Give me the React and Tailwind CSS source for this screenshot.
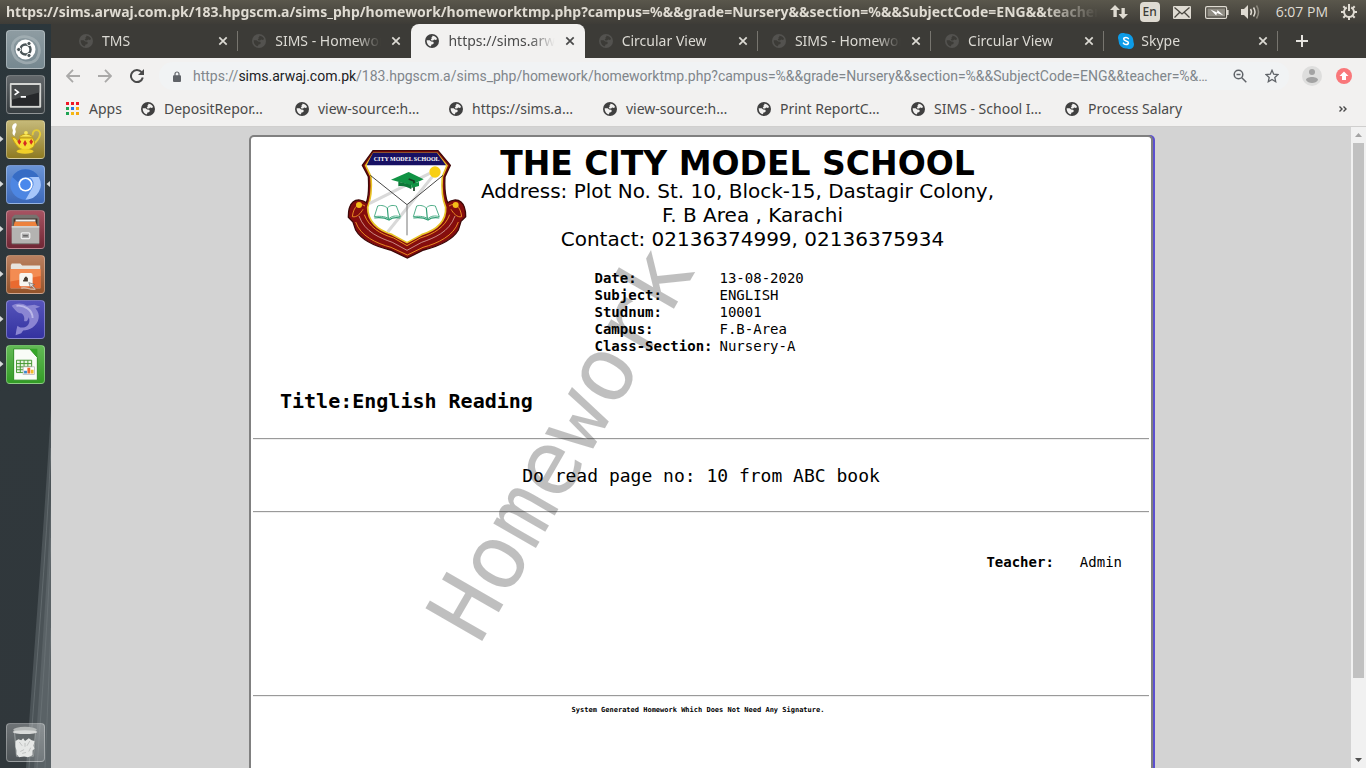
import React from "react";

const TAB_TITLES = [
  { title: "TMS", icon: "globe" },
  { title: "SIMS - Homework", icon: "globe" },
  { title: "https://sims.arwaj", icon: "globe", active: true },
  { title: "Circular View", icon: "globe" },
  { title: "SIMS - Homework", icon: "globe" },
  { title: "Circular View", icon: "globe" },
  { title: "Skype", icon: "skype" },
];

const BOOKMARKS = [
  "DepositRepor…",
  "view-source:h…",
  "https://sims.a…",
  "view-source:h…",
  "Print ReportC…",
  "SIMS - School I…",
  "Process Salary",
];

const DETAILS = [
  ["Date:", "13-08-2020"],
  ["Subject:", "ENGLISH"],
  ["Studnum:", "10001"],
  ["Campus:", "F.B-Area"],
  ["Class-Section:", "Nursery-A"],
];

function Globe({ className }) {
  return (
    <svg viewBox="0 0 14 14" className={className} aria-hidden="true">
      <circle cx="7" cy="7" r="7" fill="currentColor" />
      <path
        d="M7.200 1.700c2.300-.1 4.200 1.300 4.900 3.300l-1.200 1-1.700-.4-1.100 1-1.700 0-.7-1.100 1-.8-.3-1.100 1-.8zM1.700 6.200l3 0 1.400 1.300 2 .3.800 1.100-1 1.300-1.400.4-.6 1.700C3.700 12 1.500 9.600 1.700 6.200z"
        className="fill-[var(--land)]"
      />
    </svg>
  );
}

function SkypeIcon() {
  return (
    <svg viewBox="0 0 16 16" className="size-4 shrink-0" aria-hidden="true">
      <path d="M4.500 0C7 0 6.500.6 8 .6c4.200 0 7.400 3.300 7.400 7.400 0 1.300.6 2 .6 3.500A4.500 4.500 0 0 1 11.500 16c-1.500 0-2-.6-3.500-.6A7.400 7.400 0 0 1 .6 8C.6 6.500 0 6 0 4.500A4.500 4.500 0 0 1 4.500 0z" fill="#0d9ce8" />
      <path d="M10.400 5.700C9.800 4.700 9 4.500 8 4.500c-1.300 0-2.300.5-2.300 1.600 0 2.400 4.700 1.200 4.700 3.600 0 1.200-1.100 1.800-2.400 1.800-1.200 0-2.100-.4-2.600-1.400" fill="none" stroke="#fff" strokeWidth="1.500" strokeLinecap="round" />
    </svg>
  );
}

function TopBar() {
  return (
    <header className="flex h-6 shrink-0 items-center bg-linear-to-b from-[#5a574c] to-[#3e3c37] text-[#dfdbd2]">
      <h1 className="min-w-0 flex-1 overflow-hidden pl-[6px] font-['Noto_Sans',sans-serif] text-[14px] leading-6 font-bold whitespace-nowrap mask-[linear-gradient(to_right,black_95%,transparent_100%)]">
        https://sims.arwaj.com.pk/183.hpgscm.a/sims_php/homework/homeworktmp.php?campus=%&&grade=Nursery&&section=%&&SubjectCode=ENG&&teacher=
      </h1>
      <div className="flex shrink-0 items-center pr-2 pl-3">
        <svg viewBox="0 0 18 16" className="h-4 w-[18px]" aria-label="Network">
          <path d="M5 1l5 5H6.800v7H3.400V6H0zM13 15L8.500 10h3V4h3.300v6H18z" fill="#dfdbd2" />
        </svg>
        <span className="ml-3 flex h-5 w-5 items-center justify-center rounded-sm bg-[#dfdbd2] font-['Noto_Sans',sans-serif] text-[12px] leading-5 font-medium text-[#3c3b37]">En</span>
        <svg viewBox="0 0 18 13" className="ml-[13px] h-[13px] w-[18px]" aria-label="Mail">
          <rect width="18" height="13" rx="1" fill="#dfdbd2" />
          <path d="M1.500 1.500L9 8l7.500-6.500M1.500 11.500l5-5M16.500 11.500l-5-5" fill="none" stroke="#4a4740" strokeWidth="1.300" />
        </svg>
        <svg viewBox="0 0 24 13" className="ml-[14px] h-[13px] w-6" aria-label="Battery">
          <rect x=".6" y=".6" width="21" height="11.800" rx="1.500" fill="none" stroke="#dfdbd2" strokeWidth="1.200" />
          <rect x="2.500" y="2.500" width="17.500" height="8" fill="#8f8c83" />
          <path d="M22 4h1.600v5H22z" fill="#dfdbd2" />
          <path d="M5.500 3.500l6.500 3 .5-2.500 6 5.500-6.500-2.600-.8 2.600z" fill="#fff" />
        </svg>
        <svg viewBox="0 0 20 16" className="ml-3 h-4 w-5" aria-label="Sound">
          <path d="M0 5h3l4-4v14l-4-4H0z" fill="#dfdbd2" />
          <path d="M9.500 5q2 3 0 6M12.500 3.500q3 4.500 0 9" fill="none" stroke="#dfdbd2" strokeWidth="1.500" />
          <path d="M15.500 1.500q4 6.500 0 13" fill="none" stroke="#8b877d" strokeWidth="1.500" />
        </svg>
        <time className="ml-[15px] font-['Open_Sans',sans-serif] text-[14px] leading-6">6:07 PM</time>
        <svg viewBox="0 0 18 18" className="ml-3 size-[18px]" aria-label="System" fill="none" stroke="#dfdbd2">
          <path d="M6.800 4.500a5 5 0 1 0 4.400 0" strokeWidth="2" />
          <path d="M9 1v7" strokeWidth="2" />
          <path d="M3.300 3.300l2 2M14.700 3.300l-2 2M1 9h3M14 9h3M3.300 14.700l2-2M14.700 14.700l-2-2M9 14v3" strokeWidth="2" />
        </svg>
      </div>
    </header>
  );
}

function LauncherTile({ label, tint, running, focused, children }) {
  return (
    <li className="relative flex w-full pl-[6px]">
      {running && (
        <svg viewBox="0 0 4 6" className="absolute top-4 left-0 h-[6px] w-1" aria-hidden="true">
          <path d="M0 0l3.500 3L0 6z" fill="#d5d8d9" />
        </svg>
      )}
      <button aria-label={label} className={`size-[39px] overflow-hidden rounded-[4px] border border-white/30 ${tint}`}>
        <svg viewBox="0 0 39 39" className="size-full" aria-hidden="true">
          {children}
        </svg>
      </button>
      {focused && (
        <svg viewBox="0 0 4 6" className="absolute top-4 right-[1px] h-[6px] w-1" aria-hidden="true">
          <path d="M4 0L.5 3 4 6z" fill="#d5d8d9" />
        </svg>
      )}
    </li>
  );
}

function Launcher() {
  return (
    <nav className="relative flex w-[51px] shrink-0 flex-col justify-between bg-linear-to-b from-[#2b363b] via-[#30383c] to-[#30373b] pt-[6px] pb-[6px]">
      <svg viewBox="0 0 51 360" preserveAspectRatio="none" className="absolute right-0 bottom-0 h-[360px] w-full" aria-hidden="true">
        <path d="M51 0V360H26C34 240 44 120 51 0z" fill="#4b5357" />
        <path d="M51 90V360H34C40 270 47 180 51 90z" fill="#5a6266" />
        <path d="M51 40C46 150 36 260 29 360M51 130C48 210 42 290 37 360M51 220L45 360" fill="none" stroke="#70787b" strokeWidth="1" opacity=".6" />
      </svg>
      <ul className="flex flex-col gap-[6px]">
        <LauncherTile label="Dash" tint="bg-linear-to-b from-[#8e9ca2] to-[#768890]">
          <path d="M7 24C2 12 12 3 24 7c10 3 13 14 7 23M31 30c-8 7-21 3-24-6" fill="none" stroke="#aab5b9" strokeWidth="3" opacity=".7" />
          <circle cx="19.500" cy="19.500" r="10.500" fill="#fff" />
          <circle cx="19.500" cy="19.500" r="5.300" fill="none" stroke="#4b5558" strokeWidth="2.600" />
          <g fill="#4b5558" stroke="#fff" strokeWidth="1">
            <circle cx="12.300" cy="19.500" r="2.200" />
            <circle cx="23.200" cy="13.200" r="2.200" />
            <circle cx="23.200" cy="25.800" r="2.200" />
          </g>
        </LauncherTile>
        <LauncherTile label="Terminal" tint="bg-linear-to-b from-[#63686b] to-[#383e41]">
          <rect x="3" y="7.500" width="33" height="26" rx="1" fill="#d4d5d2" />
          <rect x="5" y="9.500" width="29" height="22" fill="#26282a" />
          <path d="M5 9.500h29v8L5 25z" fill="#46494a" />
          <path d="M8 14l4 3-4 3M14.500 22h5.500" fill="none" stroke="#fff" strokeWidth="1.700" />
        </LauncherTile>
        <LauncherTile label="Teapot" running tint="bg-linear-to-b from-[#c5b978] to-[#8f7b20]">
          <path d="M8 16c-4-3-1-5-2-7-2-4 2-8 4-6 1 3-2 4-1 7 1 2-1 3-1 6z" fill="#fff" />
          <path d="M27 15c0-7 8-7 8-1-1 5-4 8-8 11" fill="none" stroke="#e5cb35" strokeWidth="2" />
          <path d="M5 17l4 1 3 4 2-4h13c4 6 2 10-4 12H16c-5-2-8-7-11-13z" fill="#f6dc36" stroke="#c59e13" />
          <path d="M13 17c3-4 11-4 14 0z" fill="#f9e85c" stroke="#c59e13" />
          <circle cx="20" cy="12.500" r="2" fill="#f9e85c" />
          <ellipse cx="19" cy="32" rx="9" ry="2.500" fill="#f0cf28" />
          <path d="M13 19l2 3-2 3-2-3zM19 20l2 3.500-2 3.500-2-3.500zM25.500 19l2 3-2 3-2-3z" fill="#d52a20" />
        </LauncherTile>
        <LauncherTile label="Chromium" running focused tint="bg-linear-to-b from-[#6a94d6] to-[#3c68b8]">
          <circle cx="19.500" cy="19.500" r="16" fill="#4d86e2" />
          <path d="M5.600 11.500A16 16 0 0 1 33.400 11.500H19.500a8 8 0 0 0-7.500 6z" fill="#376cc4" />
          <path d="M33.400 11.500A16 16 0 0 1 19.500 35.500l7-12a8 8 0 0 0-3-12z" fill="#a6c6fa" />
          <circle cx="19.500" cy="19.500" r="7.500" fill="#fff" />
          <circle cx="19.500" cy="19.500" r="5.700" fill="#4a88ec" />
        </LauncherTile>
        <LauncherTile label="Files" running tint="bg-linear-to-b from-[#a75362] to-[#702735]">
          <path d="M5 7l3-3h23l3 3v28H5z" fill="#77736f" />
          <path d="M7 8h25v8H7z" fill="#3e332d" />
          <path d="M8 11h22l2 5H7z" fill="#ed823d" />
          <path d="M9 9h21v2H9z" fill="#eee" />
          <path d="M5 16h29v18H5z" fill="#b4b3b1" />
          <path d="M5 16h29v1.500H5z" fill="#e2e1df" />
          <rect x="15" y="23" width="9" height="6" rx="1" fill="#aaa" stroke="#f0f0f0" strokeWidth="1.300" />
          <path d="M17 26h5" stroke="#666" strokeWidth="1.500" />
        </LauncherTile>
        <LauncherTile label="Remote folder" running tint="bg-linear-to-b from-[#ba8060] to-[#945329]">
          <path d="M4 10l1-2h9l2 2h19v24H4z" fill="#e7e3de" />
          <path d="M3.500 14h32v20h-32z" fill="#e96a30" />
          <path d="M3.500 14h32v7l-32 6z" fill="#f38c52" />
          <rect x="13" y="18" width="14" height="14" rx="2" fill="#f7f5ef" />
          <path d="M18 25v-2h1v-1h2v1h1v4h-5v-2z" fill="#463b30" />
          <path d="M23 28l6 2-2 1 3 3-1 1-3-3-1 2z" fill="#ddd" stroke="#555" strokeWidth=".6" />
          <path d="M15 34c5-2 8 2 15 1" fill="none" stroke="#d5b59f" strokeWidth="1.500" />
        </LauncherTile>
        <LauncherTile label="Dolphin database" running tint="bg-linear-to-b from-[#5654bb] to-[#3432a0]">
          <path d="M5 5c5-3 11-3 16 0l8-1 6 2-5 2c6 6 4 15-3 20-3 2-7 3-10 3l-2 3-6 2 1-6 1-4c2 2 4 2 6 2 5-1 8-5 6-11-1 4-3 5-5 4 1-4-1-7-3-8-4 0-7-4-10-8z" fill="#8a85d2" />
          <path d="M10 5c8-1 17 4 17 13" fill="none" stroke="#bab7e8" strokeWidth="2" />
        </LauncherTile>
        <LauncherTile label="Spreadsheet" running tint="bg-linear-to-b from-[#62b955] to-[#329c25]">
          <path d="M7 3h17l8 9v24H7z" fill="#f9fcf7" stroke="#288b1d" strokeWidth="1" />
          <path d="M24 3h8v9z" fill="#35a529" />
          <path d="M10 15h16v13H10z" fill="#e5f3df" stroke="#43962f" />
          <path d="M10 18.500h16M10 22h16M10 25h16M14 15v13M18 15v13M22 15v13" stroke="#43962f" />
          <rect x="17" y="22" width="12" height="8" fill="#fff" stroke="#aaa" strokeWidth=".7" />
          <path d="M18 26h3v3h-3z" fill="#3c87cc" />
          <path d="M21.500 23h3v6h-3z" fill="#ec6930" />
          <path d="M25 25h3v4h-3z" fill="#efbb2c" />
        </LauncherTile>
      </ul>
      <ul>
        <LauncherTile label="Trash" tint="bg-linear-to-b from-white/30 to-white/15">
          <path d="M8 9l2 25h18l2-25z" fill="#62686a" stroke="#9da2a3" />
          <ellipse cx="19" cy="6" rx="12.500" ry="3" fill="#b5b9b8" />
          <ellipse cx="19" cy="8.500" rx="13" ry="2" fill="#d9dbda" />
          <path d="M9 18l3-2 3 1 2-2 2 3 4-3 3 2 3 1-1 5 1 3-2 2v5l-5 2-4-1-5 1-3-3v-4l-1-4z" fill="#e5e7e6" />
          <path d="M13 19l3 4M24 18l-3 5M14 29l4-2M25 25l-2 4M19 20v4M16 31l4-1" stroke="#bdc0c0" />
        </LauncherTile>
      </ul>
    </nav>
  );
}

function Tab({ title, icon, active, divider }) {
  return (
    <li
      className={`relative flex h-[34px] min-w-0 flex-1 items-center pr-[10px] pl-[14px] ${
        active ? "rounded-t-lg bg-[#f2f1f0] text-[#4a4a4a]" : "text-[#dcdad4]"
      }`}
    >
      {icon === "skype" ? (
        <SkypeIcon />
      ) : (
        <Globe className={`size-[14px] shrink-0 ${active ? "text-[#404040] [--land:#f2f1f0]" : "text-[#53524f] [--land:#3c3b37]"}`} />
      )}
      <a
        href="#tab"
        className={`min-w-0 flex-1 overflow-hidden font-['Noto_Sans',sans-serif] text-[14px] leading-5 whitespace-nowrap mask-[linear-gradient(to_right,black_75%,transparent_98%)] ${icon === "skype" ? "ml-[7px]" : "ml-[9px]"}`}
      >
        {title}
      </a>
      <button aria-label={`Close ${title}`} className="ml-2 flex size-[10px] items-center justify-center">
        <svg viewBox="0 0 10 10" className="size-[10px]" aria-hidden="true">
          <path d="M1.300 1.300l7.400 7.400M8.700 1.300L1.300 8.700" stroke="currentColor" strokeWidth="1.700" />
        </svg>
      </button>
      {divider && <span className="absolute top-[7px] right-0 h-5 w-px bg-[#77756f]" />}
    </li>
  );
}

function TabStrip() {
  return (
    <div className="flex h-[34px] items-center bg-[#3c3b37] pl-[14px]">
      <ul className="flex w-[93.2%] min-w-0">
        {TAB_TITLES.map((tab, i) => (
          <Tab key={i} {...tab} divider={i !== 1 && i !== 2} />
        ))}
      </ul>
      <button aria-label="New tab" className="ml-[18px]">
        <svg viewBox="0 0 12 12" className="size-3" aria-hidden="true">
          <path d="M6 0v12M0 6h12" stroke="#e6e4df" strokeWidth="2" />
        </svg>
      </button>
    </div>
  );
}

function Toolbar() {
  return (
    <div className="flex h-9 items-center bg-[#f2f1f0] pr-[14px] pl-[15px]">
      <button aria-label="Back">
        <svg viewBox="0 0 14 14" className="size-[14px]" fill="none" stroke="#aaa9a8" strokeWidth="1.800">
          <path d="M14 7H1.500M7 .8L1 7l6 6.200" />
        </svg>
      </button>
      <button aria-label="Forward" className="ml-[18px]">
        <svg viewBox="0 0 14 14" className="size-[14px]" fill="none" stroke="#aaa9a8" strokeWidth="1.800">
          <path d="M0 7h12.500M7 .8L13 7l-6 6.200" />
        </svg>
      </button>
      <button aria-label="Reload" className="ml-[18px]">
        <svg viewBox="0 0 14 14" className="size-[14px]">
          <path d="M11.600 3.200A6 6 0 1 0 12.800 8.500" fill="none" stroke="#4a4a4a" strokeWidth="2" />
          <path d="M14 0v6H8z" fill="#4a4a4a" />
        </svg>
      </button>
      <form className="ml-[15px] flex h-7 min-w-0 flex-1 items-center rounded-full bg-[#f1f3f4] pr-[10px] pl-[14px]">
        <svg viewBox="0 0 8 11" className="h-[11px] w-2 shrink-0" aria-label="Secure">
          <path d="M2 5V3a2 2 0 0 1 4 0v2" fill="none" stroke="#5f6368" strokeWidth="1.200" />
          <rect y="4.200" width="8" height="6.800" rx="1" fill="#5f6368" />
        </svg>
        <a href="#page" className="ml-3 min-w-0 flex-1 truncate font-['Roboto',sans-serif] text-[14px] leading-5 text-[#80868b]">
          https://<span className="text-[#202124]">sims.arwaj.com.pk</span>/183.hpgscm.a/sims_php/homework/homeworktmp.php?campus=%&&grade=Nursery&&section=%&&SubjectCode=ENG&&teacher=%&…
        </a>
        <button type="button" aria-label="Zoom" className="ml-[15px]">
          <svg viewBox="0 0 14 14" className="size-[14px]" fill="none" stroke="#5f6368" strokeWidth="1.500">
            <circle cx="5.500" cy="5.500" r="4.300" />
            <path d="M8.800 8.800l4.500 4.500M3.500 5.500h4" />
          </svg>
        </button>
        <button type="button" aria-label="Bookmark this page" className="ml-[18px]">
          <svg viewBox="0 0 14 14" className="size-[14px]" fill="none" stroke="#5f6368" strokeWidth="1.300">
            <path d="M7 1.300l1.700 3.900 4.300.4-3.200 2.900.9 4.200L7 10.500l-3.700 2.200.9-4.200L1 5.600l4.300-.4z" />
          </svg>
        </button>
      </form>
      <button aria-label="Profile" className="ml-[13px]">
        <svg viewBox="0 0 20 20" className="size-5">
          <circle cx="10" cy="10" r="10" fill="#dededd" />
          <circle cx="10" cy="6" r="3" fill="#a3a3a3" />
          <path d="M4 14c0-4 12-4 12 0-2 4-10 4-12 0z" fill="#a3a3a3" />
        </svg>
      </button>
      <button aria-label="Update" className="ml-[14px]">
        <svg viewBox="0 0 16 16" className="size-4">
          <circle cx="8" cy="8" r="8" fill="#f9777a" />
          <path d="M8 3.500l4.500 4.500H10v4H6V8H3.500z" fill="#fff" />
        </svg>
      </button>
    </div>
  );
}

function AppsIcon() {
  const colors = ["#f01827", "#f01827", "#f01827", "#1fa352", "#2676e6", "#f5a812", "#1fa352", "#f5b912", "#f5a812"];
  return (
    <svg viewBox="0 0 13 13" className="size-[13px]" aria-hidden="true">
      {colors.map((c, i) => (
        <rect key={i} x={(i % 3) * 5} y={Math.floor(i / 3) * 5} width="3" height="3" fill={c} />
      ))}
    </svg>
  );
}

function BookmarkBar() {
  return (
    <nav className="flex h-[33px] items-center border-b border-[#d0cfce] bg-[#f2f1f0] pr-[19px] pb-[3px] pl-[15px] font-['Noto_Sans',sans-serif] text-[14px] leading-5 text-[#4a4a4a]">
      <a href="#apps" className="flex w-[75px] shrink-0 items-center gap-[10px]">
        <AppsIcon />
        Apps
      </a>
      {BOOKMARKS.map((b, i) => (
        <a key={i} href="#bookmark" className="flex w-[154px] shrink-0 items-center gap-[9px] whitespace-nowrap">
          <Globe className="size-[14px] shrink-0 text-[#404040] [--land:#f2f1f0]" />
          {b}
        </a>
      ))}
      <button aria-label="More bookmarks" className="ml-auto">
        <svg viewBox="0 0 8 6" className="h-[6px] w-2" fill="none" stroke="#4a4a4a" strokeWidth="1.400">
          <path d="M.5.5L3 3 .5 5.500M4.500.5L7 3 4.500 5.500" />
        </svg>
      </button>
    </nav>
  );
}

function Crest() {
  return (
    <svg viewBox="20 25 360 330" className="h-[110px] w-[120px] shrink-0" role="img" aria-label="The City Model School crest">
      <path
        d="M98 30H293L330 74L314 108C312 140 314 165 322 186C332 178 350 174 362 184C374 194 376 210 376 228L362 242L354 268C338 296 298 316 250 328L201 352L150 328C100 316 62 296 46 268L38 244L24 230C24 208 26 194 38 184C50 174 68 178 78 186C86 165 86 140 84 108L66 74Z"
        fill="#850d0d"
        stroke="#3d0808"
        strokeWidth="4"
      />
      <path
        d="M100 38H290L320 75L306 108C303 145 306 175 316 200C318 240 290 268 244 282L200 306L156 282C110 268 82 240 82 200C92 175 95 145 92 108L76 75Z"
        fill="#fff"
        stroke="#e8c426"
        strokeWidth="5"
      />
      <path d="M88 188L268 98M142 274L284 98" stroke="#d9d9d9" strokeWidth="9" />
      <path d="M98 36H290L317 74H79Z" fill="#171063" />
      <text x="199" y="61" textAnchor="middle" fill="#fff" className="font-['Liberation_Serif',serif] text-[18px] font-bold">
        CITY MODEL SCHOOL
      </text>
      <path d="M90 104L200 192L308 104" fill="none" stroke="#222" strokeWidth="2.500" />
      <path d="M200 192V284" stroke="#777" strokeWidth="3" />
      <circle cx="284" cy="94" r="17" fill="#f8cf13" />
      <path d="M152 117L205 94L250 116L212 134Z" fill="#109344" />
      <path d="M174 123V137C186 134 202 138 213 146V132Z" fill="#0c7837" />
      <path d="M205 115L221 121V151" fill="none" stroke="#173b22" strokeWidth="5" />
      <path d="M236 124V136L213 142V130Z" fill="#109344" />
      {[0, 117].map((dx) => (
        <g key={dx} transform={`translate(${dx} 0)`} fill="none" stroke="#2e9d72" strokeWidth="2.500">
          <path d="M112 196C124 192 134 196 141 202C150 192 160 194 168 196L180 228C166 224 154 226 146 234C132 226 116 226 102 228Z" fill="#fff" />
          <path d="M141 202L144 234M102 232C118 230 132 230 146 238C156 230 168 230 180 232" strokeWidth="3.500" />
        </g>
      ))}
      <path d="M74 196C56 184 40 196 36 228C50 232 62 216 68 206" fill="none" stroke="#e88a22" strokeWidth="3" />
      <path d="M326 196C344 184 360 196 364 228C350 232 338 216 332 206" fill="none" stroke="#e88a22" strokeWidth="3" />
      <circle cx="56" cy="193" r="9" fill="#f3bd18" />
      <circle cx="346" cy="193" r="9" fill="#f3bd18" />
      <path d="M46 244C60 286 108 308 152 320L201 343L248 320C292 308 340 286 354 244" fill="none" stroke="#e88a22" strokeWidth="3" />
      <path d="M72 222C86 260 120 280 160 292L200 315L240 292C280 280 314 260 328 222" fill="none" stroke="#e88a22" strokeWidth="3" />
      <path d="M56 226C74 276 120 292 156 305L200 329L244 305C280 292 326 276 344 226" fill="none" stroke="#f0c9c0" strokeWidth="2" />
    </svg>
  );
}

function Rule() {
  return <hr className="mx-[2px] h-[2px] border-t border-b border-t-[#9a9a9a] border-b-[#eeeeee]" />;
}

function Homework() {
  return (
    <article className="relative mt-2 w-full max-w-[904px] rounded-t-[5px] border-2 border-b-0 border-[#808080] bg-white font-['DejaVu_Sans_Mono',monospace] text-black shadow-[2px_0_0_#5b4fd0]">
      <header className="flex justify-center pt-3 pr-[61px]">
        <Crest />
        <div className="ml-[14px] text-center font-['DejaVu_Sans',sans-serif] text-[20px] leading-[24px]">
          <h2 className="text-[33px] leading-[30px] font-bold">THE CITY MODEL SCHOOL</h2>
          <p>Address: Plot No. St. 10, Block-15, Dastagir Colony,</p>
          <div className="pl-[30px]">
            <p>F. B Area , Karachi</p>
            <p>Contact: 02136374999, 02136375934</p>
          </div>
        </div>
      </header>
      <table className="mx-auto mt-[11px] text-[14px] leading-[17px]">
        <tbody>
          {DETAILS.map(([k, v]) => (
            <tr key={k}>
              <th scope="row" className="w-[125px] p-0 text-left font-bold">{k}</th>
              <td className="w-[88px] p-0">{v}</td>
            </tr>
          ))}
        </tbody>
      </table>
      <h3 className="mt-[34px] pl-[29px] text-[20px] leading-6 font-bold">Title:English Reading</h3>
      <div className="mt-[25px]">
        <Rule />
      </div>
      <p className="pt-[25px] pb-6 text-center text-[18px] leading-[22px]">Do read page no: 10 from ABC book</p>
      <Rule />
      <p className="flex justify-end gap-[26px] pt-[41px] pr-[29px] text-[14px] leading-[17px]">
        <b>Teacher:</b>
        <span>Admin</span>
      </p>
      <div className="mt-[124px]">
        <Rule />
      </div>
      <p className="pt-2 pr-[6px] pb-24 text-center text-[7px] leading-[10px] font-bold">System Generated Homework Which Does Not Need Any Signature.</p>
      <p className="pointer-events-none absolute top-[246px] left-[93px] -rotate-60 text-[90px] leading-[120px] text-black/25">Homework</p>
    </article>
  );
}

function Scrollbar() {
  return (
    <div className="flex w-[15px] shrink-0 flex-col items-center bg-[#f1f1f1] py-[6px]" aria-hidden="true">
      <svg viewBox="0 0 7 4" className="h-1 w-[7px] shrink-0">
        <path d="M0 4l3.500-4L7 4z" fill="#a3a3a3" />
      </svg>
      <div className="mt-[6px] h-[535px] w-[11px] shrink-0 bg-[#c1c1c1]" />
      <svg viewBox="0 0 7 4" className="mt-auto h-1 w-[7px] shrink-0">
        <path d="M0 0l3.500 4L7 0z" fill="#505050" />
      </svg>
    </div>
  );
}

export default function App() {
  return (
    <div className="flex h-screen flex-col overflow-hidden">
      <TopBar />
      <div className="flex min-h-0 flex-1">
        <Launcher />
        <div className="flex min-w-0 flex-1 flex-col">
          <TabStrip />
          <Toolbar />
          <BookmarkBar />
          <div className="flex min-h-0 flex-1 bg-[#d3d3d3]">
            <main className="flex min-w-0 flex-1 items-start justify-center overflow-hidden">
              <Homework />
            </main>
            <Scrollbar />
          </div>
        </div>
      </div>
    </div>
  );
}
